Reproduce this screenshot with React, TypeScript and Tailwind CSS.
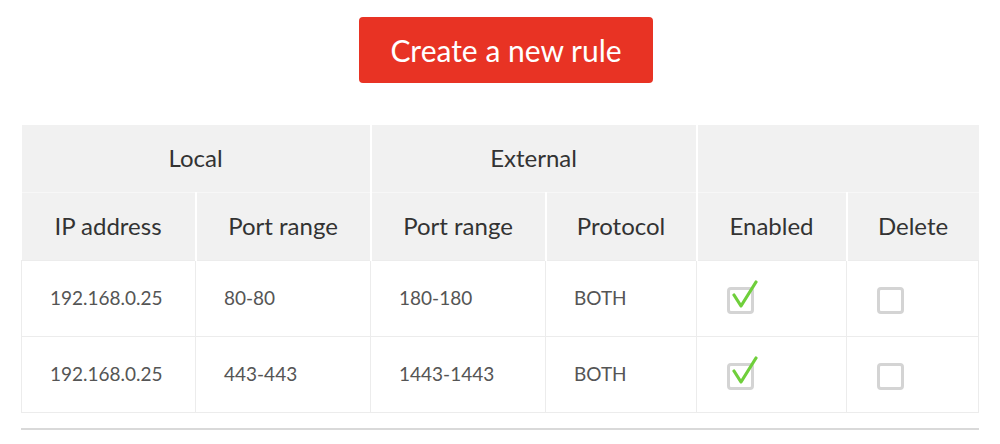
const rows = [
  { ip: "192.168.0.25", local: "80-80", ext: "180-180", proto: "BOTH", enabled: true },
  { ip: "192.168.0.25", local: "443-443", ext: "1443-1443", proto: "BOTH", enabled: true },
]

function Box({ checked }: { checked: boolean }) {
  return (
    <span className="relative inline-block h-[27px] w-[27px] rounded-[4px] border-[3px] border-[#d4d4d4] bg-white align-middle">
      {checked && (
        <svg
          viewBox="0 0 28 30"
          className="absolute left-0 top-[-10px] h-[30px] w-[28px]"
        >
          <path
            d="M4 15 L11 26 L26 2"
            fill="none"
            stroke="#6fcf3b"
            strokeWidth="3.2"
            strokeLinecap="round"
            strokeLinejoin="round"
          />
        </svg>
      )}
    </span>
  )
}

export default function App() {
  return (
    <div className="h-[444px] w-[1000px] bg-white font-['Lato',sans-serif]">
      <div className="flex justify-center pl-[12px] pt-[17px]">
        <button
          type="button"
          className="h-[66px] w-[294px] rounded-[4px] bg-[#e83324] text-[30px] text-white"
        >
          Create a new rule
        </button>
      </div>

      <div className="mx-[21px] mt-[42px]">
        <table className="w-full table-fixed border-collapse">
          <colgroup>
            <col className="w-[174px]" />
            <col className="w-[175px]" />
            <col className="w-[175px]" />
            <col className="w-[151px]" />
            <col className="w-[150px]" />
            <col className="w-[132px]" />
          </colgroup>
          <thead className="bg-[#f1f1f1] text-[24px] text-[#333]">
            <tr className="h-[67px] border-b border-[#f7f7f7]">
              <th colSpan={2} className="border-r-2 border-white font-normal">
                Local
              </th>
              <th colSpan={2} className="border-r-2 border-white font-normal">
                External
              </th>
              <th colSpan={2} className="font-normal"></th>
            </tr>
            <tr className="h-[68px]">
              <th className="border-r-2 border-white font-normal">IP address</th>
              <th className="border-r-2 border-white font-normal">Port range</th>
              <th className="border-r-2 border-white font-normal">Port range</th>
              <th className="border-r-2 border-white font-normal">Protocol</th>
              <th className="border-r-2 border-white font-normal">Enabled</th>
              <th className="font-normal">Delete</th>
            </tr>
          </thead>
          <tbody className="text-[19px] text-[#555]">
            {rows.map((r, i) => (
              <tr key={i} className="h-[76px]">
                <td className="border border-[#ececec] pl-[28px]">{r.ip}</td>
                <td className="border border-[#ececec] pl-[28px]">{r.local}</td>
                <td className="border border-[#ececec] pl-[28px]">{r.ext}</td>
                <td className="border border-[#ececec] pl-[28px]">{r.proto}</td>
                <td className="border border-[#ececec] pl-[30px] pt-[2px]">
                  <Box checked={r.enabled} />
                </td>
                <td className="border border-[#ececec] pl-[30px] pt-[2px]">
                  <Box checked={false} />
                </td>
              </tr>
            ))}
          </tbody>
        </table>
        <div className="mt-[15px] h-[2px] bg-[#d9d9d9]" />
      </div>
    </div>
  )
}
